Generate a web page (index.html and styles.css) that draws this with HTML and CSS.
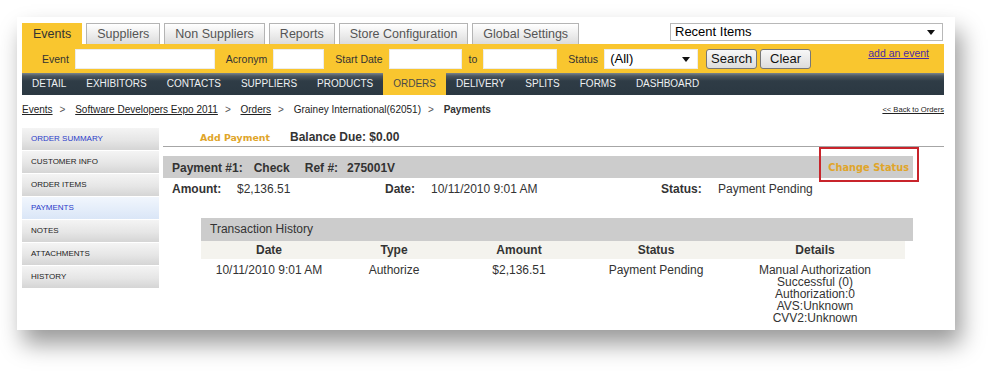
FILE: index.html
```html
<!DOCTYPE html>
<html lang="en">
<head>
    <meta charset="UTF-8">
    <title>Payments - Grainey International</title>
    <link rel="stylesheet" href="styles.css">
</head>
<body>
    <div class="window">
        <div class="top-row">
            <ul class="tabs">
                <li class="tab active">Events</li>
                <li class="tab">Suppliers</li>
                <li class="tab">Non Suppliers</li>
                <li class="tab">Reports</li>
                <li class="tab">Store Configuration</li>
                <li class="tab">Global Settings</li>
            </ul>
            <div class="select recent">Recent Items<span class="arrow"></span></div>
        </div>

        <div class="filter-bar">
            <label class="first">Event</label><span class="input w-event"></span>
            <label>Acronym</label><span class="input w-acronym"></span>
            <label>Start Date</label><span class="input w-date"></span>
            <label class="to">to</label><span class="input w-date2"></span>
            <label>Status</label><div class="select status">(All)<span class="arrow"></span></div>
            <button class="btn search">Search</button>
            <button class="btn clear">Clear</button>
            <a class="add-event" href="#">add an event</a>
        </div>

        <ul class="subnav">
            <li>Detail</li>
            <li>Exhibitors</li>
            <li>Contacts</li>
            <li>Suppliers</li>
            <li>Products</li>
            <li class="active">Orders</li>
            <li>Delivery</li>
            <li>Splits</li>
            <li>Forms</li>
            <li>Dashboard</li>
        </ul>

        <div class="breadcrumb">
            <div class="trail">
                <a href="#">Events</a><span class="sep">&gt;</span>
                <a href="#">Software Developers Expo 2011</a><span class="sep">&gt;</span>
                <a href="#">Orders</a><span class="sep">&gt;</span>
                <span>Grainey International(62051)</span><span class="sep">&gt;</span>
                <span class="current">Payments</span>
            </div>
            <a class="back" href="#">&lt;&lt; Back to Orders</a>
        </div>

        <div class="content">
            <ul class="sidebar">
                <li class="blue">Order Summary</li>
                <li>Customer Info</li>
                <li>Order Items</li>
                <li class="blue active">Payments</li>
                <li>Notes</li>
                <li>Attachments</li>
                <li>History</li>
            </ul>

            <div class="main">
                <div class="balance-row">
                    <a class="add-payment" href="#">Add Payment</a>
                    <span class="balance">Balance Due: $0.00</span>
                </div>

                <div class="payment-bar">
                    <span class="pay-no">Payment #1:</span>
                    <span class="pay-type">Check</span>
                    <span class="pay-ref">Ref #:</span>
                    <span>275001V</span>
                    <a class="change-status" href="#">Change Status</a>
                </div>

                <div class="payment-info">
                    <b>Amount:</b><span>$2,136.51</span>
                    <b>Date:</b><span>10/11/2010 9:01 AM</span>
                    <b>Status:</b><span>Payment Pending</span>
                </div>

                <div class="history">
                    <div class="history-title">Transaction History</div>
                    <table>
                        <tr>
                            <th class="c-date">Date</th>
                            <th class="c-type">Type</th>
                            <th class="c-amount">Amount</th>
                            <th class="c-status">Status</th>
                            <th class="c-details">Details</th>
                        </tr>
                        <tr>
                            <td>10/11/2010 9:01 AM</td>
                            <td>Authorize</td>
                            <td>$2,136.51</td>
                            <td>Payment Pending</td>
                            <td>Manual Authorization<br>Successful (0)<br>Authorization:0<br>AVS:Unknown<br>CVV2:Unknown</td>
                        </tr>
                    </table>
                </div>
            </div>
        </div>
    </div>
</body>
</html>
```

FILE: styles.css
```css
body {
    margin: 0;
    padding: 17px 0 0 17px;
    height: 378px;
    box-sizing: border-box;
    background: #fff;
    font-family: "Liberation Sans", Arial, sans-serif;
    color: #333;
    overflow: hidden;
}
ul {
    list-style: none;
    margin: 0;
    padding: 0;
}
a {
    color: #222;
}

.window {
    width: 938px;
    height: 313px;
    padding: 6px 11px 0 5px;
    box-sizing: border-box;
    background: #fff;
    box-shadow: 6px 14px 22px rgba(0, 0, 0, 0.4);
    overflow: hidden;
}

/* top tabs */
.top-row {
    display: flex;
    justify-content: space-between;
    align-items: flex-start;
    height: 21px;
}
.tabs {
    display: flex;
    gap: 4px;
}
.tab {
    height: 20px;
    line-height: 21px;
    padding: 0 10px;
    font-size: 12.5px;
    color: #555;
    border: 1px solid #b4b4b4;
    border-bottom: none;
    background: linear-gradient(#ffffff, #dcdcdc);
}
.tab.active {
    background: #f9c62f;
    border-color: #f9c62f;
    color: #333;
}

.select {
    position: relative;
    box-sizing: border-box;
    background: #fff;
    border: 1px solid #b8b8b8;
    color: #000;
    font-size: 12.5px;
}
.select .arrow {
    position: absolute;
    right: 7px;
    top: 50%;
    margin-top: -2px;
    border-left: 4px solid transparent;
    border-right: 4px solid transparent;
    border-top: 5px solid #111;
}
.recent {
    width: 273px;
    height: 18px;
    line-height: 16px;
    padding-left: 4px;
    margin-right: 1px;
    font-size: 13px;
}

/* search bar */
.filter-bar {
    display: flex;
    align-items: center;
    height: 29px;
    padding: 0 15px 0 20px;
    background: #f9c62f;
    font-size: 10.5px;
}
.filter-bar label {
    margin: 0 6px 0 11px;
    color: #333;
}
.filter-bar label.first {
    margin-left: 0;
}
.filter-bar label.to {
    margin-left: 7px;
}
.input {
    height: 20px;
    box-sizing: border-box;
    background: #fff;
    border: 1px solid #ececec;
}
.w-event { width: 140px; }
.w-acronym { width: 51px; }
.w-date { width: 73px; }
.w-date2 { width: 74px; }
.status {
    width: 94px;
    height: 20px;
    line-height: 18px;
    padding-left: 5px;
    border-color: #ececec;
    font-size: 13px;
}
.btn {
    width: 51px;
    height: 20px;
    padding: 0;
    font-family: "Liberation Sans", Arial, sans-serif;
    font-size: 13px;
    color: #111;
    background: linear-gradient(#f7f7f7, #dcdcdc);
    border: 1px solid #777;
    border-radius: 3px;
}
.search {
    margin-left: 8px;
}
.clear {
    margin-left: 3px;
}
.add-event {
    margin-left: auto;
    align-self: flex-start;
    margin-top: 3px;
    color: #4a2aa6;
}

/* dark sub navigation */
.subnav {
    display: flex;
    height: 22px;
    background: linear-gradient(#7c858c 0, #4b565f 3px, #2f3c46 8px, #2b3842 100%);
}
.subnav li {
    padding: 0 10px;
    line-height: 22px;
    font-size: 10px;
    text-transform: uppercase;
    color: #eef0f2;
}
.subnav li.active {
    background: #f9c62f;
    color: #4a4a4a;
}

/* breadcrumb */
.breadcrumb {
    display: flex;
    justify-content: space-between;
    align-items: center;
    margin-top: 8px;
    height: 12px;
    font-size: 10px;
    color: #222;
}
.breadcrumb .sep {
    margin: 0 7px;
    color: #555;
}
.breadcrumb .current {
    font-weight: bold;
    color: #333;
}
.back {
    font-size: 7.6px;
    color: #222;
}

/* body */
.content {
    display: flex;
    margin-top: 13px;
}
.sidebar {
    width: 137px;
    flex-shrink: 0;
}
.sidebar li {
    height: 22px;
    line-height: 22px;
    margin-bottom: 1px;
    padding-left: 9px;
    font-size: 8px;
    text-transform: uppercase;
    color: #222;
    background: linear-gradient(#f4f4f4 0%, #e6e6e6 55%, #d5d5d5 100%);
}
.sidebar li.blue {
    color: #2b3bc9;
}
.sidebar li.active {
    background: linear-gradient(#f1f6fd, #dae6f7);
}

.main {
    flex: 1;
    margin-left: 4px;
    font-size: 12px;
}
.balance-row {
    display: flex;
    align-items: center;
    height: 18px;
    padding-left: 37px;
    border-bottom: 1px solid #a6a6a6;
}
.add-payment {
    font-family: "DejaVu Sans", Verdana, sans-serif;
    font-size: 9.4px;
    font-weight: bold;
    color: #e0a52a;
    text-decoration: none;
}
.balance {
    margin-left: 20px;
    font-weight: bold;
    color: #333;
}

.payment-bar {
    display: flex;
    align-items: center;
    height: 22px;
    margin: 9px 31px 0 0;
    padding: 1px 4px 0 9px;
    box-sizing: border-box;
    background: #cccccc;
    font-weight: bold;
    color: #333;
}
.pay-type {
    margin-left: 11px;
}
.pay-ref {
    margin: 0 9px 0 15px;
}
.change-status {
    position: relative;
    margin-left: auto;
    font-family: "DejaVu Sans", Verdana, sans-serif;
    font-size: 9.8px;
    color: #e0a52a;
    text-decoration: none;
}
.change-status::after {
    content: "";
    position: absolute;
    left: -9px;
    right: -10px;
    top: -15px;
    bottom: -9px;
    border: 2px solid #c8242b;
}

.payment-info {
    display: grid;
    grid-template-columns: 65px 148px 46px 230px 57px auto;
    align-items: center;
    height: 21px;
    padding-left: 9px;
    color: #333;
}

.history {
    width: 712px;
    margin: 19px 0 0 38px;
}
.history-title {
    height: 23px;
    line-height: 23px;
    padding-left: 9px;
    background: #cccccc;
    color: #333;
}
.history table {
    width: 704px;
    border-collapse: collapse;
    font-size: 12px;
    color: #333;
}
.history th {
    height: 18px;
    padding: 0;
    background: #f4f3ee;
    font-weight: bold;
}
.history td {
    padding: 5px 0 0;
    text-align: center;
    vertical-align: top;
    line-height: 12px;
}
.c-date { width: 136px; }
.c-type { width: 114px; }
.c-amount { width: 136px; }
.c-status { width: 138px; }
.c-details { width: 180px; }
```
